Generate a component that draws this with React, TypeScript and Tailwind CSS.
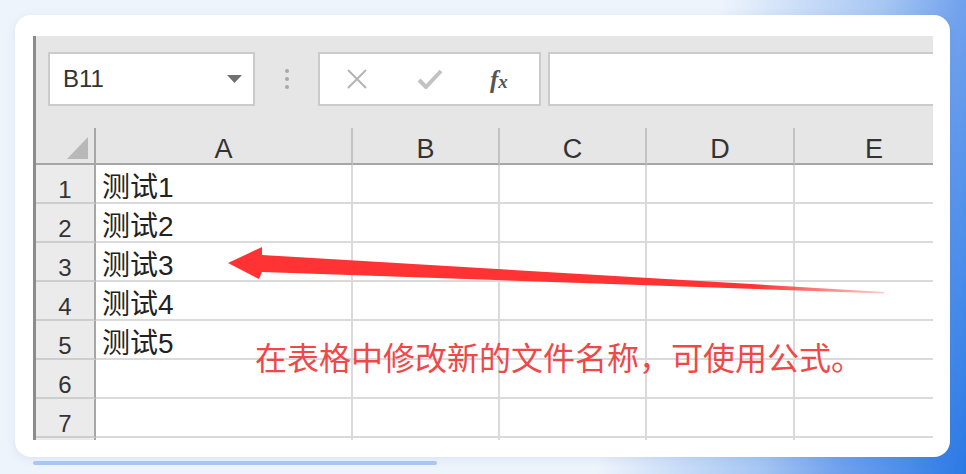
import React from 'react'

const cols = [
  { label: 'A', w: 'w-[257px]' },
  { label: 'B', w: 'w-[147px]' },
  { label: 'C', w: 'w-[147px]' },
  { label: 'D', w: 'w-[148px]' },
  { label: 'E', w: 'w-[160px]' },
]

const rows = ['测试1', '测试2', '测试3', '测试4', '测试5', '', '', '']

export default function App() {
  return (
    <div className="w-[966px] h-[474px] overflow-hidden pt-[15px] pl-[15px] bg-[linear-gradient(105deg,#eef4fc_0%,#eef4fc_66%,#a6c6f3_81%,#72a2ed_88%,#4e8fea_94%,#2a79e4_100%)] font-['Liberation_Sans','Noto_Sans_CJK_SC',sans-serif]">
      {/* card */}
      <div className="w-[935px] h-[442px] rounded-[16px] bg-white shadow-[0_2px_10px_rgba(40,90,170,0.10)] pt-[21px] pl-[18px]">
        <div className="relative w-[900px] h-[404px] overflow-hidden border-l-[3px] border-[#8c8c8c] bg-white">
          {/* formula bar */}
          <div className="h-[92px] bg-[#e6e6e6] flex items-start pt-[16px] pl-[12px]">
            <div className="w-[207px] h-[54px] shrink-0 bg-white border-2 border-[#cbcbcb] flex items-center justify-between pl-[13px] pr-[11px]">
              <span className="text-[24px] leading-none text-[#333]">B11</span>
              <svg width="15" height="8" viewBox="0 0 15 8">
                <polygon points="0,0 15,0 7.5,8" fill="#707070" />
              </svg>
            </div>
            <div className="w-[63px] h-[54px] shrink-0 flex flex-col items-center justify-center gap-[4px]">
              <span className="w-[4px] h-[4px] rounded-full bg-[#a9a9a9]" />
              <span className="w-[4px] h-[4px] rounded-full bg-[#a9a9a9]" />
              <span className="w-[4px] h-[4px] rounded-full bg-[#a9a9a9]" />
            </div>
            <div className="w-[223px] h-[54px] shrink-0 bg-white border-2 border-[#cbcbcb] flex items-center pl-[26px]">
              <svg width="22" height="20" viewBox="0 0 22 20" className="shrink-0">
                <path d="M2 1 L20 19 M20 1 L2 19" stroke="#b4b4b4" strokeWidth="2" fill="none" />
              </svg>
              <svg width="26" height="22" viewBox="0 0 26 22" className="ml-[49px] shrink-0">
                <path d="M2 12 L9 19 L24 3" stroke="#c2c2c2" strokeWidth="4" fill="none" strokeLinejoin="round" />
              </svg>
              <span className="ml-[47px] font-['Liberation_Serif',serif] italic font-bold text-[25px] leading-none text-[#555]">
                f<span className="text-[19px]">x</span>
              </span>
            </div>
            <div className="ml-[7px] flex-1 h-[54px] bg-white border-2 border-r-0 border-[#cbcbcb]" />
          </div>

          {/* column headers */}
          <div className="flex h-[37px]">
            <div className="w-[60px] shrink-0 bg-[#e6e6e6] border-r-2 border-r-[#a6a6a6] border-b-2 border-b-[#a6a6a6] flex items-end justify-end pr-[6px] pb-[4px]">
              <svg width="21" height="22" viewBox="0 0 21 22">
                <polygon points="21,0 21,22 0,22" fill="#b8b8b8" />
              </svg>
            </div>
            {cols.map(c => (
              <div
                key={c.label}
                className={`${c.w} shrink-0 bg-[#e6e6e6] border-r-2 border-r-[#c2c2c2] border-b-2 border-b-[#a6a6a6] flex items-end justify-center text-[27px] leading-none text-[#333]`}
              >
                {c.label}
              </div>
            ))}
          </div>

          {/* rows (the 8th one only shows its top edge) */}
          {rows.map((v, i) => (
            <div key={i} className="flex h-[39px]">
              <div className="w-[60px] shrink-0 bg-[#ebebeb] border-r-2 border-r-[#a6a6a6] border-b-2 border-b-[#cdcdcd] flex items-end justify-center text-[24px] leading-none text-[#333]">
                {i < 7 ? i + 1 : ''}
              </div>
              {cols.map((c, j) => (
                <div
                  key={c.label}
                  className={`${c.w} shrink-0 border-r-2 border-r-[#dadada] border-b-2 border-b-[#dadada] flex items-end pl-[6px] text-[28px] leading-none text-[#222]`}
                >
                  {j === 0 ? v : ''}
                </div>
              ))}
            </div>
          ))}

          {/* annotation arrow */}
          <svg className="absolute left-0 top-0 pointer-events-none" width="897" height="404" viewBox="0 0 897 404">
            <defs>
              <linearGradient id="tail" x1="192" y1="0" x2="850" y2="0" gradientUnits="userSpaceOnUse">
                <stop offset="0" stopColor="#ff3333" />
                <stop offset="0.8" stopColor="#ff3333" />
                <stop offset="1" stopColor="#ff3333" stopOpacity="0.25" />
              </linearGradient>
            </defs>
            <polygon
              points="192,227 226,211 226,219 848,256 848,257.5 226,236 223,243"
              fill="url(#tail)"
            />
          </svg>

          {/* annotation text */}
          <div className="absolute left-[219px] top-[304px] whitespace-nowrap font-['Noto_Sans_CJK_SC',sans-serif] text-[32px] leading-none text-[#f04848]">
            在表格中修改新的文件名称，可使用公式。
          </div>
        </div>
      </div>
      <div className="ml-[18px] mt-[4px] w-[404px] h-[4px] rounded-full bg-[#a8c6ef]" />
    </div>
  )
}
